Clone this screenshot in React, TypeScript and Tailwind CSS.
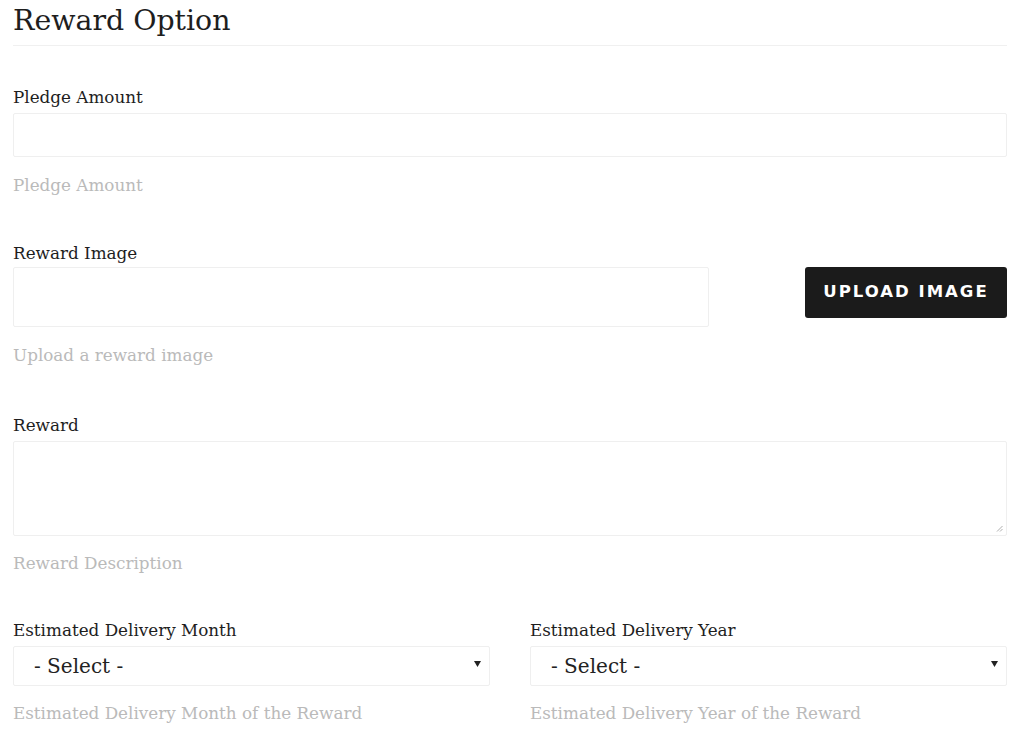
import React from "react";

const serif = "font-['DejaVu_Serif',serif]";

function Label({ children }: { children: React.ReactNode }) {
  return <div className={`${serif} text-[16.8px] leading-[20px] text-[#1e1e1e]`}>{children}</div>;
}
function Help({ children }: { children: React.ReactNode }) {
  return <div className={`${serif} text-[16.8px] leading-[20px] text-[#bababa]`}>{children}</div>;
}

function Select() {
  return (
    <div className="relative mt-[6px] h-[40px] rounded-[2px] border border-[#efefef] bg-white">
      <span className={`absolute left-[20px] top-[6px] ${serif} text-[20px] leading-[26px] text-[#222]`}>
        - Select -
      </span>
      <svg className="absolute right-[8px] top-[14px]" width="7" height="6" viewBox="0 0 7 6">
        <path d="M0 0 H7 L3.5 6 Z" fill="#222" />
      </svg>
    </div>
  );
}

export default function App() {
  return (
    <div className="min-h-[742px] bg-white px-[13px] pt-[3px] text-[#222]">
      <div className="w-[994px]">
        <h1 className={`${serif} text-[28.4px] leading-[36px] text-[#1e1e1e]`}>Reward Option</h1>
        <div className="mt-[6px] h-px bg-[#f0f0f0]" />

        <div className="mt-[41px]">
          <Label>Pledge Amount</Label>
          <div className="mt-[6px] h-[44px] rounded-[2px] border border-[#efefef]" />
          <div className="mt-[18px]">
            <Help>Pledge Amount</Help>
          </div>
        </div>

        <div className="mt-[48px]">
          <Label>Reward Image</Label>
          <div className="mt-[4px] flex items-start">
            <div className="h-[60px] w-[696px] rounded-[2px] border border-[#efefef]" />
            <button className="ml-auto flex h-[51px] w-[202px] items-center justify-center rounded-[3px] bg-[#1b1b1b] font-['DejaVu_Sans',sans-serif] text-[16.5px] font-bold tracking-[2px] text-white">
              UPLOAD IMAGE
            </button>
          </div>
          <div className="mt-[18px]">
            <Help>Upload a reward image</Help>
          </div>
        </div>

        <div className="mt-[50px]">
          <Label>Reward</Label>
          <div className="relative mt-[6px] h-[95px] rounded-[2px] border border-[#efefef]">
            <svg className="absolute bottom-[3px] right-[3px]" width="7" height="7" viewBox="0 0 7 7">
              <path d="M6.5 1 L1 6.5 M6.5 4 L4 6.5" stroke="#999" strokeWidth="0.8" />
            </svg>
          </div>
          <div className="mt-[17px]">
            <Help>Reward Description</Help>
          </div>
        </div>

        <div className="mt-[47px] grid grid-cols-2 gap-x-[40px]">
          <div>
            <Label>Estimated Delivery Month</Label>
            <Select />
            <div className="mt-[17px]">
              <Help>Estimated Delivery Month of the Reward</Help>
            </div>
          </div>
          <div>
            <Label>Estimated Delivery Year</Label>
            <Select />
            <div className="mt-[17px]">
              <Help>Estimated Delivery Year of the Reward</Help>
            </div>
          </div>
        </div>
      </div>
    </div>
  );
}
